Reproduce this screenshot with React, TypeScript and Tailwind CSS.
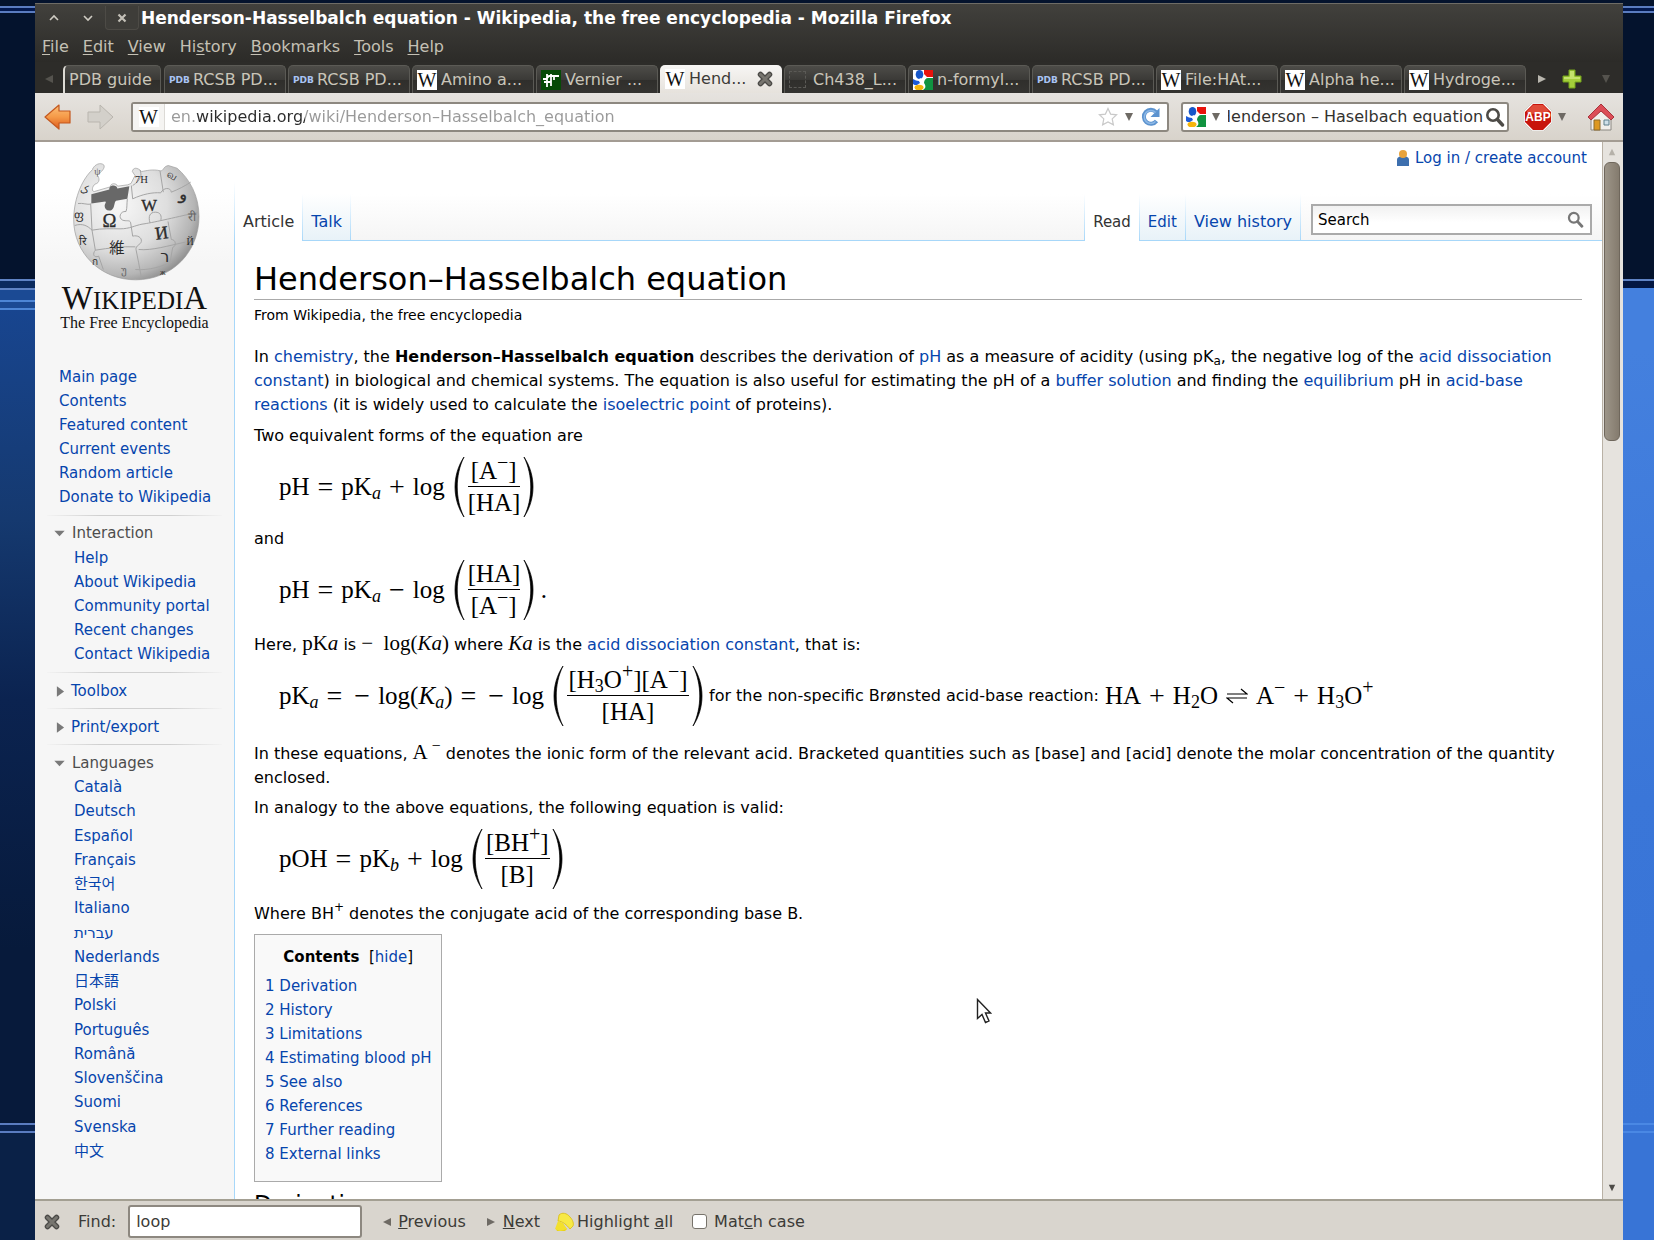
import React from 'react';

const link = 'text-[#0645ad] hover:underline';

function A({ children }: { children: React.ReactNode }) {
  return <a href="#" className={link}>{children}</a>;
}

/* ---------- Browser chrome icons ---------- */

function GoogleIcon() {
  return (
    <svg viewBox="0 0 20 20" className="h-5 w-5 shrink-0">
      <rect width="20" height="20" fill="#fff" />
      <path d="M11 0h9v7h-6l-3-3z" fill="#e8130c" />
      <path d="M20 8v12H10c3-2 3-4 1-7 0-3 2-5 4-5z" fill="#109340" />
      <path d="M0 9c2 1 4 2 6 2l1 2-3 2c-2 0-3 0-4-1z" fill="#1d5bd8" />
      <ellipse cx="6.500" cy="4.500" rx="3.800" ry="4.500" fill="#1656c9" />
      <path d="M7 8c2 1 3 2 3 4H7c-1-1-1-3 0-4z" fill="#fff" />
      <ellipse cx="6" cy="17.500" rx="4.500" ry="2.800" fill="#f5b50a" />
    </svg>
  );
}

function WIcon() {
  return (
    <span className="flex h-5 w-5 shrink-0 items-center justify-center bg-white font-['Liberation_Serif',serif] text-[20px] leading-5 text-[#111]">
      W
    </span>
  );
}

function PdbIcon() {
  return (
    <span className="w-5 shrink-0 text-center font-['DejaVu_Sans',sans-serif] text-[9px] leading-5 font-bold text-[#a9c3f3]">
      PDB
    </span>
  );
}

function VernierIcon() {
  return (
    <svg viewBox="0 0 20 20" className="h-5 w-5 shrink-0">
      <rect width="20" height="20" fill="#064a06" />
      <path d="M2 9h3l3-3h10M6 4v13M10 4v12M3 12h7M13 7v3" stroke="#fff" strokeWidth="1.800" fill="none" />
    </svg>
  );
}

function BlankIcon() {
  return <span className="mr-[3px] h-[17px] w-[17px] shrink-0 border border-dashed border-[#5b5a56]" />;
}

function CloseX({ className }: { className?: string }) {
  return (
    <svg viewBox="0 0 16 16" className={className}>
      <path d="M3.500 3.500l9 9M12.500 3.500l-9 9" stroke="#4b4a47" strokeWidth="5.500" strokeLinecap="round" />
      <path d="M3.500 3.500l9 9M12.500 3.500l-9 9" stroke="#77756f" strokeWidth="3" strokeLinecap="round" />
    </svg>
  );
}

function Tri({ dir, color, className }: { dir: 'l' | 'r' | 'd' | 'u'; color: string; className?: string }) {
  const d = { l: 'M9 1v8L1 5z', r: 'M1 1v8l8-4z', d: 'M1 1h8L5 9z', u: 'M1 9h8L5 1z' }[dir];
  return (
    <svg viewBox="0 0 10 10" preserveAspectRatio="none" className={className ?? 'h-[10px] w-[10px] shrink-0'}>
      <path d={d} fill={color} />
    </svg>
  );
}

function Magnifier({ className, color }: { className: string; color: string }) {
  return (
    <svg viewBox="0 0 20 20" className={className}>
      <circle cx="8" cy="8" r="5.700" fill="none" stroke={color} strokeWidth="2.600" />
      <path d="M12.500 12.500l5 5.500" stroke={color} strokeWidth="3.400" strokeLinecap="round" />
    </svg>
  );
}

function NavArrow({ forward }: { forward?: boolean }) {
  return (
    <svg viewBox="0 0 28 28" className="h-7 w-7">
      <defs>
        <linearGradient id="orange" x1="0" y1="0" x2="0" y2="1">
          <stop offset="0" stopColor="#fbbf78" />
          <stop offset="0.500" stopColor="#f59a48" />
          <stop offset="1" stopColor="#dd5a1c" />
        </linearGradient>
      </defs>
      {forward ? (
        <path d="M1 9h12V2l13 12-13 12v-7H1z" fill="#d3d0ca" stroke="#b9b5ae" strokeLinejoin="round" />
      ) : (
        <path d="M27 8H16V2L2 14l14 12v-6h11z" fill="url(#orange)" stroke="#c4581f" strokeWidth="1.200" strokeLinejoin="round" />
      )}
    </svg>
  );
}

/* ---------- Tabs ---------- */

type Tab = { label: string; icon: React.ReactNode; active?: boolean };
const tabs: Tab[] = [
  { label: 'RCSB PD...', icon: <PdbIcon /> },
  { label: 'RCSB PD...', icon: <PdbIcon /> },
  { label: 'Amino a...', icon: <WIcon /> },
  { label: 'Vernier ...', icon: <VernierIcon /> },
  { label: 'Hend...', icon: <WIcon />, active: true },
  { label: 'Ch438_L...', icon: <BlankIcon /> },
  { label: 'n-formyl...', icon: <GoogleIcon /> },
  { label: 'RCSB PD...', icon: <PdbIcon /> },
  { label: 'File:HAt...', icon: <WIcon /> },
  { label: 'Alpha he...', icon: <WIcon /> },
  { label: 'Hydroge...', icon: <WIcon /> },
];

const darkTab =
  'flex h-7 items-center rounded-t-[5px] border-x border-t border-[#5b5a55] bg-[linear-gradient(#4d4c48,#3b3a37_50%,#2f2e2b_51%,#353431)] text-[#c9c5b9]';

function TabBar() {
  return (
    <div className="flex h-[31px] shrink-0 items-end bg-[#2d2c29] text-base leading-5 whitespace-nowrap">
      <button aria-label="Scroll tabs left" className="flex h-7 w-7 items-center justify-center">
        <Tri dir="l" color="#55534e" />
      </button>
      <button className={`${darkTab} w-[98px] border-l-2 border-l-[#dcdad4] pl-1`}>PDB guide</button>
      <div className="ml-[3px] flex min-w-0 gap-[2px]">
        {tabs.map((t, i) =>
          t.active ? (
            <button key={i} className="flex h-7 w-[122px] items-center gap-1 rounded-t-[5px] bg-[linear-gradient(#f7f6f4,#e6e2dc)] pr-[9px] pl-[5px] text-[#3c3b37]">
              {t.icon}
              <span className="flex-1 text-left">{t.label}</span>
              <CloseX className="h-4 w-4" />
            </button>
          ) : (
            <button key={i} className={`${darkTab} w-[122px] gap-1 overflow-hidden px-1`}>
              {t.icon}
              <span className="truncate">{t.label}</span>
            </button>
          ),
        )}
      </div>
      <button aria-label="Scroll tabs right" className="ml-[10px] flex h-7 w-3 items-center justify-center">
        <Tri dir="r" color="#b9b6ae" />
      </button>
      <button aria-label="New tab" className="ml-[14px] flex h-7 w-5 items-center justify-center">
        <svg viewBox="0 0 20 20" className="h-5 w-5">
          <path d="M7 1h6v6h6v6h-6v6H7v-6H1V7h6z" fill="#a4cf3b" stroke="#74a31c" />
          <path d="M8 2h4v6h6v2H2V8h6z" fill="#c4e26c" />
        </svg>
      </button>
      <button aria-label="List all tabs" className="ml-[18px] flex h-7 w-3 items-center justify-center">
        <Tri dir="d" color="#55534e" />
      </button>
    </div>
  );
}

function TitleBar() {
  return (
    <div className="flex h-[29px] shrink-0 items-center border-t border-[#6e6c66] pl-[10px]">
      <button aria-label="Minimize" className="flex h-6 w-[18px] items-center justify-center">
        <svg viewBox="0 0 12 12" className="h-3 w-3"><path d="M2 8l4-4 4 4" fill="none" stroke="#cfccc3" strokeWidth="1.600" /></svg>
      </button>
      <button aria-label="Maximize" className="ml-4 flex h-6 w-[18px] items-center justify-center">
        <svg viewBox="0 0 12 12" className="h-3 w-3"><path d="M2 4l4 4 4-4" fill="none" stroke="#cfccc3" strokeWidth="1.600" /></svg>
      </button>
      <button aria-label="Close" className="ml-2 flex h-6 w-[34px] items-center justify-center rounded-b border-x border-b border-[#4d4b46] bg-[#3e3d39]">
        <svg viewBox="0 0 12 12" className="h-3 w-3"><path d="M2.500 2.500l7 7M9.500 2.500l-7 7" stroke="#c3c0b7" strokeWidth="2.200" /></svg>
      </button>
      <h2 className="ml-[2px] truncate text-[17px] leading-5 font-bold text-white">
        Henderson-Hasselbalch equation - Wikipedia, the free encyclopedia - Mozilla Firefox
      </h2>
    </div>
  );
}

const menus = [
  ['', 'F', 'ile'],
  ['', 'E', 'dit'],
  ['', 'V', 'iew'],
  ['Hi', 's', 'tory'],
  ['', 'B', 'ookmarks'],
  ['', 'T', 'ools'],
  ['', 'H', 'elp'],
];

function NavBar() {
  return (
    <div className="flex h-[49px] shrink-0 items-center border-b-2 border-[#a39c93] bg-[linear-gradient(#e6e3df,#d8d3cb)] pr-2 pl-2 text-base">
      <button aria-label="Back"><NavArrow /></button>
      <button aria-label="Forward" className="ml-4"><NavArrow forward /></button>
      <div className="ml-4 flex h-[30px] flex-1 items-center rounded-[3px] border-2 border-[#8d8880] bg-white">
        <span className="flex h-full w-8 items-center justify-center border-r border-[#dcdad6] bg-[#f5f4f2]"><WIcon /></span>
        <input
          aria-label="Location"
          defaultValue="en.wikipedia.org/wiki/Henderson–Hasselbalch_equation"
          className="ml-[6px] min-w-0 flex-1 bg-[linear-gradient(to_right,#999_25px,#2b2b2b_25px,#2b2b2b_134px,#999_134px)] bg-clip-text text-transparent outline-none"
        />
        <svg viewBox="0 0 20 20" className="h-5 w-5">
          <path d="M10 1.500l2.600 5.600 6 .7-4.400 4.100 1.200 6L10 15l-5.400 2.900 1.200-6L1.400 7.800l6-.7z" fill="#fff" stroke="#c9c9c9" strokeWidth="1.200" />
        </svg>
        <Tri dir="d" color="#6e6a64" className="mr-[3px] ml-[6px] h-[10px] w-[10px]" />
        <button aria-label="Reload" className="mr-[6px] ml-1">
          <svg viewBox="0 0 20 20" className="h-5 w-5">
            <path d="M15.500 14a7 7 0 1 1-.5-9" fill="none" stroke="#5c93cf" strokeWidth="4" />
            <path d="M18.500 1v9h-9z" fill="#5c93cf" />
            <path d="M14.500 14.500a6.500 6.500 0 1 1 0-9" fill="none" stroke="#8db8e6" strokeWidth="1.500" />
          </svg>
        </button>
      </div>
      <div className="ml-3 flex h-[30px] w-[328px] items-center rounded-[3px] border-2 border-[#8d8880] bg-white pr-[2px] pl-[3px]">
        <GoogleIcon />
        <Tri dir="d" color="#6e6a64" className="mx-[5px] h-[10px] w-[10px] shrink-0" />
        <input aria-label="Web search" defaultValue="Henderson – Haselbach equation" className="ml-[2px] min-w-0 flex-1 -indent-[9px] text-[#33322f] outline-none" />
        <Magnifier className="h-5 w-5 shrink-0" color="#4d4b47" />
      </div>
      <button aria-label="Adblock Plus" className="ml-[15px]">
        <svg viewBox="0 0 28 28" className="h-7 w-7">
          <path d="M8 0h12l8 8v12l-8 8H8l-8-8V8z" fill="#fff" stroke="#b5b0a8" strokeWidth="0.500" />
          <path d="M9 1h10l8 8v10l-8 8H9l-8-8V9z" fill="#c8150c" />
          <path d="M9 2h10l6 6c-6 3-14 4-22 2V8z" fill="#e04a38" />
          <text x="14" y="18" textAnchor="middle" fontSize="12" fontWeight="bold" fill="#fff" fontFamily="Liberation Sans, sans-serif">ABP</text>
        </svg>
      </button>
      <Tri dir="d" color="#6e6a64" className="ml-[5px] h-[10px] w-[10px]" />
      <button aria-label="Home" className="ml-5">
        <svg viewBox="0 0 28 28" className="h-7 w-7">
          <path d="M4 14L14 5l10 9v13H4z" fill="#f1efec" stroke="#8a8782" />
          <path d="M14 1l13 13-3 3L14 8 4 17l-3-3z" fill="#dc4d57" stroke="#a8323b" />
          <path d="M7 17h6v10H7z" fill="#dd9820" stroke="#8c6a2a" />
          <path d="M17 17h5v5h-5z" fill="#cfe0ea" stroke="#5c7f8c" />
        </svg>
      </button>
    </div>
  );
}

/* ---------- Wikipedia logo ---------- */

function Globe() {
  return (
    <svg viewBox="0 0 510 380" className="h-[127px] w-[170px]" role="img" aria-label="Wikipedia globe">
      <defs>
        <radialGradient id="ball" cx="0.350" cy="0.350" r="0.720">
          <stop offset="0" stopColor="#f8f8f8" />
          <stop offset="0.550" stopColor="#dedede" />
          <stop offset="0.850" stopColor="#b5b5b5" />
          <stop offset="1" stopColor="#8a8a8a" />
        </radialGradient>
      </defs>
      <path
        d="M128 40C100 65 72 120 71 190c0 100 80 181 186 181 108 0 190-82 190-190 0-62-28-113-66-145l-26-8c-18 4-12 16-24 16-22-6-44 0-56 2-14-14-26-12-28 0l8 12-12 24-10 4-30 4c-4-10-22-10-22 2l-48 14c-10 0-6-16 2-22 16-4 14-20 6-28 14-8 26-22 20-30-10-8-26-2-33 12z"
        fill="url(#ball)"
        stroke="#9a9a9a"
        strokeWidth="2"
      />
      <path d="M124 114l54-14c-2-14 22-16 24-3l36-7-6 38-34 6c-6 4-4 24-14 28-12 4-20-4-20-12 0-8 6-10 2-14l-42 6z" fill="#686868" />
      <g fill="none" stroke="#a5a5a5" strokeWidth="3">
        <path d="M122 142l4 80c30-6 60-4 84-4 30 0 44-10 66-14 30-4 90-18 168-36" />
        <path d="M232 128c-2 18 0 26-4 38-18-2-24 20-10 26 10 4 22-2 24 8l6 40c14-4 28 4 26 16-2 10-18 12-16 24l8 40 8 44" />
        <path d="M244 88l4 40c30-14 60-20 84-18 8-16 30-18 32-2 20-8 40-18 58-30" />
        <path d="M300 200c-6-20 0-32 16-32s20 12 16 26M354 196l10 54c14 0 16 20 4 24l-8 46" />
        <path d="M74 208c24-8 40 2 52 14l10 60c-10 12-4 24 10 18l14 40M136 282c40-6 80-12 120-10M266 280c40 4 90-12 140-22" />
        <path d="M84 142c14-2 28 4 38 2M256 340c40 4 80-10 110-22M270 42c6 14 4 30-22 46M330 44l10 64" />
      </g>
      <g fill="#2c2c2c" fontFamily="Liberation Serif, serif" textAnchor="middle">
        <text x="178" y="212" fontSize="56" stroke="#2c2c2c">Ω</text>
        <text x="297" y="165" fontSize="50" stroke="#2c2c2c">W</text>
        <text x="337" y="248" fontSize="54" stroke="#2c2c2c" transform="rotate(-8 337 248)">И</text>
        <text x="344" y="318" fontSize="48" fontFamily="DejaVu Sans, sans-serif">ר</text>
        <text x="201" y="291" fontSize="46" fontFamily="Noto Sans CJK JP, sans-serif">維</text>
        <text x="402" y="130" fontSize="48" stroke="#2c2c2c" transform="rotate(10 402 120)">و</text>
        <text x="274" y="82" fontSize="32">7Н</text>
        <text x="366" y="70" fontSize="32" transform="rotate(30 366 62)">வ</text>
        <text x="88" y="190" fontSize="36">ფ</text>
        <text x="98" y="266" fontSize="34">रि</text>
        <text x="104" y="112" fontSize="30">ک</text>
        <text x="426" y="196" fontSize="36" fill="#666">री</text>
        <text x="420" y="268" fontSize="30">Й</text>
        <text x="136" y="328" fontSize="30">ก</text>
        <text x="222" y="354" fontSize="34" fill="#666">უ</text>
        <text x="338" y="356" fontSize="24">ж</text>
        <text x="142" y="56" fontSize="30" fill="#666">ψ</text>
      </g>
    </svg>
  );
}

/* ---------- Sidebar ---------- */

function Rule() {
  return <hr className="mr-3 ml-3 h-px border-0 bg-[linear-gradient(to_right,#f3f3f3,#d0d0d0_30%,#d0d0d0_70%,#f3f3f3)]" />;
}

function Sidebar() {
  return (
    <aside className="w-[199px] shrink-0 bg-[linear-gradient(#fff_0,#fff_50px,#f6f6f6_120px)] text-[15px] leading-6">
      <a href="#" className="block pt-[14px] text-[#111]">
        <span className="ml-[15px] block w-[170px]"><Globe /></span>
        <span className="mt-px block text-center font-['Liberation_Serif',serif] text-[25px] leading-7 whitespace-nowrap">
          <span className="text-[33px]">W</span>IKIPEDI<span className="text-[33px]">A</span>
        </span>
        <span className="block text-center font-['Liberation_Serif',serif] text-base leading-4 whitespace-nowrap">The Free Encyclopedia</span>
      </a>
      <ul className="mt-[34px] mb-[6px] ml-6">
        {['Main page', 'Contents', 'Featured content', 'Current events', 'Random article', 'Donate to Wikipedia'].map((t) => (
          <li key={t}><A>{t}</A></li>
        ))}
      </ul>
      <Rule />
      <h3 className="mt-[5px] mb-px flex items-center gap-[6px] pl-[18px] text-[#4d4d4d]"><Tri dir="d" color="#797979" className="h-[7px] w-[13px]" />Interaction</h3>
      <ul className="mb-[6px] ml-[39px]">
        {['Help', 'About Wikipedia', 'Community portal', 'Recent changes', 'Contact Wikipedia'].map((t) => (
          <li key={t}><A>{t}</A></li>
        ))}
      </ul>
      <Rule />
      <h3 className="mt-[6px] mb-[5px] flex items-center gap-[6px] pl-[21px]"><Tri dir="r" color="#797979" className="h-[13px] w-[9px]" /><A>Toolbox</A></h3>
      <Rule />
      <h3 className="mt-[6px] mb-[5px] flex items-center gap-[6px] pl-[21px]"><Tri dir="r" color="#797979" className="h-[13px] w-[9px]" /><A>Print/export</A></h3>
      <Rule />
      <h3 className="mt-[6px] flex items-center gap-[6px] pl-[18px] text-[#4d4d4d]"><Tri dir="d" color="#797979" className="h-[7px] w-[13px]" />Languages</h3>
      <ul className="ml-[39px] flex h-[388px] flex-col justify-between">
        {['Català', 'Deutsch', 'Español', 'Français', '한국어', 'Italiano', 'עברית', 'Nederlands', '日本語', 'Polski', 'Português', 'Română', 'Slovenščina', 'Suomi', 'Svenska', '中文'].map((t) => (
          <li key={t} className="h-6"><A>{t}</A></li>
        ))}
      </ul>
    </aside>
  );
}

/* ---------- Math ---------- */

function Paren({ close }: { close?: boolean }) {
  return (
    <svg viewBox="0 0 12 62" className="h-[62px] w-3 shrink-0">
      <path d={close ? 'M1 1C13 19 13 43 1 61 10 43 10 19 1 1z' : 'M11 1C-1 19-1 43 11 61 2 43 2 19 11 1z'} fill="#000" stroke="#000" strokeWidth="0.700" />
    </svg>
  );
}

function Frac({ top, bottom, className }: { top: React.ReactNode; bottom: React.ReactNode; className?: string }) {
  return (
    <span className={`flex flex-col text-center leading-8 ${className ?? ''}`}>
      <span className="h-8 border-b border-black">{top}</span>
      <span className="h-8">{bottom}</span>
    </span>
  );
}

function Op({ children }: { children: React.ReactNode }) {
  return <span className="mx-2 text-[28px]">{children}</span>;
}

/** Minus sign that negates the term after it. */
function Neg() {
  return <span className="mr-2 ml-1 text-[28px]">−</span>;
}

function Sub({ children }: { children: React.ReactNode }) {
  return <sub className="-bottom-1 text-[18px] leading-none">{children}</sub>;
}

function Sup({ children }: { children: React.ReactNode }) {
  return <sup className="-top-[10px] text-[20px] leading-none">{children}</sup>;
}

const math = "flex items-center font-['Liberation_Serif',serif] text-[25px] leading-8 text-black whitespace-nowrap";
const eq = `${math} pl-[25px] h-[78px]`;
const inlineMath = "font-['Liberation_Serif',serif] text-[21px] leading-none text-black";

/* ---------- Article ---------- */

const toc = ['Derivation', 'History', 'Limitations', 'Estimating blood pH', 'See also', 'References', 'Further reading', 'External links'];

function Article() {
  return (
    <article className="bg-white pr-5 pl-[19px] text-base leading-6 text-black">
      <h1 className="mt-[19px] border-b border-[#aaa] text-[32px] leading-[39px]">Henderson–Hasselbalch equation</h1>
      <p className="mt-[3px] text-sm leading-6">From Wikipedia, the free encyclopedia</p>
      <p className="mt-[18px]">
        In <A>chemistry</A>, the <b>Henderson–Hasselbalch equation</b> describes the derivation of <A>pH</A> as a measure of acidity (using pK
        <sub className="text-xs leading-none">a</sub>, the negative log of the <A>acid dissociation constant</A>) in biological and chemical systems. The
        equation is also useful for estimating the pH of a <A>buffer solution</A> and finding the <A>equilibrium</A> pH in <A>acid-base reactions</A> (it is
        widely used to calculate the <A>isoelectric point</A> of proteins).
      </p>
      <p className="mt-[7px]">Two equivalent forms of the equation are</p>
      <div className={eq}>
        <span>pH</span><Op>=</Op><span>pK<Sub><i>a</i></Sub></span><Op>+</Op><span className="mr-2">log</span>
        <Paren />
        <Frac className="mx-[3px] w-[52px]" top={<>[A<Sup>−</Sup>]</>} bottom="[HA]" />
        <Paren close />
      </div>
      <p className="mt-px">and</p>
      <div className={eq}>
        <span>pH</span><Op>=</Op><span>pK<Sub><i>a</i></Sub></span><Op>−</Op><span className="mr-2">log</span>
        <Paren />
        <Frac className="mx-[3px] w-[52px]" top="[HA]" bottom={<>[A<Sup>−</Sup>]</>} />
        <Paren close /><span className="ml-[6px]">.</span>
      </div>
      <p className="mt-1 h-6">
        Here, <span className={inlineMath}>pK<i>a</i></span> is <span className={inlineMath}>−&nbsp; log(<i>Ka</i>)</span> where{' '}
        <span className={inlineMath}><i>Ka</i></span> is the <A>acid dissociation constant</A>, that is:
      </p>
      <div className={eq}>
        <span>pK<Sub><i>a</i></Sub></span><Op>=</Op><Neg /><span>log(<i>K</i><Sub><i>a</i></Sub>)</span><Op>=</Op><Neg /><span className="mr-2">log</span>
        <Paren />
        <Frac className="mx-[3px] w-[122px]" top={<>[H<Sub>3</Sub>O<Sup>+</Sup>][A<Sup>−</Sup>]</>} bottom="[HA]" />
        <Paren close />
        <span className="mr-[6px] ml-[5px] font-['DejaVu_Sans',sans-serif] text-base">for the non-specific Brønsted acid-base reaction:</span>
        <span>HA</span><Op>+</Op><span>H<Sub>2</Sub>O</span>
        <svg viewBox="0 0 22 16" className="mx-2 h-4 w-[22px] shrink-0">
          <path d="M1 6h20l-6-5M21 10H1l6 5" fill="none" stroke="#000" strokeWidth="1.200" />
        </svg>
        <span>A<Sup>−</Sup></span><Op>+</Op><span>H<Sub>3</Sub>O<Sup>+</Sup></span>
      </div>
      <p className="mt-[7px]">
        In these equations, <span className={inlineMath}>A <sup className="leading-none">−</sup></span> denotes the ionic form of the relevant acid. Bracketed quantities such as [base] and
        [acid] denote the molar concentration of the quantity enclosed.
      </p>
      <p className="mt-[6px]">In analogy to the above equations, the following equation is valid:</p>
      <div className={eq}>
        <span>pOH</span><Op>=</Op><span>pK<Sub><i>b</i></Sub></span><Op>+</Op><span className="mr-2">log</span>
        <Paren />
        <Frac className="mx-[2px] w-[65px]" top={<>[BH<Sup>+</Sup>]</>} bottom="[B]" />
        <Paren close />
      </div>
      <p className="mt-1 h-6">Where BH<sup className="-top-2 text-xs leading-none">+</sup> denotes the conjugate acid of the corresponding base B.</p>
      <nav aria-label="Contents" className="mt-2 w-fit border border-[#aaa] bg-[#f9f9f9] px-[10px] pt-[10px] pb-[15px] text-[15px] leading-6">
        <div className="mb-[5px] text-center"><b>Contents</b>&nbsp; [<button className={link}>hide</button>]</div>
        <ol>
          {toc.map((t, i) => (
            <li key={t}><a href="#" className={link}>{i + 1} {t}</a></li>
          ))}
        </ol>
      </nav>
      <h2 className="mt-[6px] flex items-baseline justify-between text-[23px] leading-8">
        Derivation <span className="text-[15px]">[<A>edit</A>]</span>
      </h2>
    </article>
  );
}

/** Tab divider that fades in towards the baseline of the tab row. */
function Divider() {
  return <span className="w-px shrink-0 bg-[linear-gradient(#fff,#a7d7f9)]" />;
}

function PageHeader() {
  const tabLink = 'flex items-center bg-[linear-gradient(#fff,#e8f2f8)] px-2 pt-[9px] text-[#0645ad]';
  return (
    <header className="text-base">
      <div className="flex h-[52px] items-start justify-end gap-[6px] pt-1 pr-[15px] text-[15px] leading-6">
        <svg viewBox="0 0 12 16" className="mt-1 h-4 w-3">
          <path d="M0 16V10c0-3 3-4 6-4s6 1 6 4v6z" fill="#3d6fae" />
          <circle cx="6" cy="4" r="4" fill="#e8a33c" />
        </svg>
        <A>Log in / create account</A>
      </div>
      <div className="flex h-[47px] bg-[linear-gradient(#fff,#f5f5f5)] text-[15px] leading-6">
        <a href="#" className="flex items-center bg-white pt-[9px] pr-2 pl-2 text-base text-[#333]">Article</a>
        <Divider />
        <div className="flex flex-1 border-b border-[#a7d7f9] text-base">
          <a href="#" className={tabLink}>Talk</a>
          <Divider />
        </div>
        <Divider />
        <a href="#" className="flex items-center bg-white px-2 pt-[9px] text-[#333]">Read</a>
        <Divider />
        <div className="flex border-b border-[#a7d7f9] pr-[10px]">
          <a href="#" className={tabLink}>Edit</a>
          <Divider />
          <a href="#" className={`${tabLink} text-base`}>View history</a>
          <Divider />
          <div className="mt-[10px] ml-[10px] flex h-[31px] w-[281px] items-center border-2 border-[#aaa] bg-[linear-gradient(#f1f1f1,#fff_60%)] pr-[6px] pl-[5px]">
            <input aria-label="Search" placeholder="Search" className="min-w-0 flex-1 outline-none placeholder:text-black" />
            <button aria-label="Go"><Magnifier className="h-[17px] w-[17px]" color="#777" /></button>
          </div>
        </div>
      </div>
    </header>
  );
}

function ScrollBar() {
  return (
    <div className="flex w-[21px] shrink-0 flex-col items-center border-l border-[#b9b1a5] bg-[#e6e3de] pr-[2px]">
      <Tri dir="u" color="#b5b1a9" className="my-[6px] h-2 w-2" />
      <div className="h-[279px] w-4 rounded-[6px] border border-[#6f675c] bg-[linear-gradient(to_right,#9d9588,#847b6e)]" />
      <Tri dir="d" color="#4d4b47" className="mt-auto mb-[7px] h-2 w-2" />
    </div>
  );
}

function FindBar() {
  return (
    <form className="flex h-[41px] shrink-0 items-center border-t-2 border-[#a39f92] bg-[#d9d5ce] pt-[2px] pl-[9px] text-base leading-5 text-[#3c3b37]">
      <button type="button" aria-label="Close find bar"><CloseX className="h-4 w-4" /></button>
      <label htmlFor="find" className="ml-[18px]">Find:</label>
      <input id="find" defaultValue="loop" className="ml-3 h-[33px] w-[234px] rounded-[3px] border-2 border-[#8d8880] bg-white px-[6px] outline-none" />
      <button type="button" className="ml-5 flex items-center gap-[6px]"><Tri dir="l" color="#6e6a64" /><span><u>P</u>revious</span></button>
      <button type="button" className="ml-5 flex items-center gap-[7px]"><Tri dir="r" color="#6e6a64" /><span><u>N</u>ext</span></button>
      <button type="button" className="ml-[14px] flex items-center gap-[3px]">
        <svg viewBox="0 0 20 20" className="h-5 w-5">
          <path d="M2 17l5-6 6 6-2 2H3z" fill="#e8d21a" />
          <path d="M5 3c3-3 8-2 11 2 3 3 4 7 3 9l-3 3C13 13 8 9 4 9z" fill="#f7e945" stroke="#d9bd10" strokeWidth="0.800" />
          <path d="M4 9l5 2 4 6-7 2-5-2z" fill="#f3e02d" />
        </svg>
        <span>Highlight <u>a</u>ll</span>
      </button>
      <label className="ml-[19px] flex items-center gap-[7px]">
        <input type="checkbox" className="h-[15px] w-[15px] appearance-none rounded-[3px] border border-[#77736b] bg-white" />
        <span>Mat<u>c</u>h case</span>
      </label>
    </form>
  );
}

export default function App() {
  return (
    <div className="flex h-screen overflow-hidden bg-[#04132d] font-['DejaVu_Sans','Noto_Sans_CJK_JP','Noto_Sans_CJK_KR',sans-serif]">
      <div className="w-[35px] shrink-0 bg-[linear-gradient(#04132d_6px,#5a7cc0_6px,#5a7cc0_8px,#02184f_8px,#02184f_11px,#5a7cc0_11px,#5a7cc0_13px,#04132d_13px,#04132d_279px,#5f83c4_279px,#5f83c4_281px,#0b2a5e_281px,#0b2a5e_288px,#5f83c4_288px,#5f83c4_290px,#1b4a94_290px,#1b4a94_300px,#4d86d6_300px,#4d86d6_302px,#1b4a94_302px,#1b4a94_308px,#4d86d6_308px,#4d86d6_310px,#18458f_310px,#15396f_520px,#0b2350_700px,#071a3b_950px,#071a3b_1123px,#5a7cc0_1123px,#5a7cc0_1125px,#0a2350_1125px,#0a2350_1131px,#5a7cc0_1131px,#5a7cc0_1133px,#0a2147_1133px)]" />
      <div className="relative flex min-w-0 flex-1 flex-col pt-[3px]">
        <div className="bg-[linear-gradient(#42413d,#2c2b28)]">
          <TitleBar />
          <nav className="flex h-[30px] items-center gap-[14px] px-[7px] pb-px text-base leading-5 text-[#c5c1b5]">
            {menus.map(([a, b, c]) => (
              <button key={b + c}>{a}<u className="underline-offset-2">{b}</u>{c}</button>
            ))}
          </nav>
        </div>
        <TabBar />
        <NavBar />
        <div className="flex min-h-0 flex-1 bg-white">
          <Sidebar />
          <div className="flex w-px shrink-0 bg-[linear-gradient(#fff_40px,#a7d7f9_100px)]" />
          <main className="min-w-0 flex-1 overflow-hidden">
            <PageHeader />
            <Article />
          </main>
          <ScrollBar />
        </div>
        <FindBar />
        <svg viewBox="0 0 16 26" className="pointer-events-none absolute top-[998px] left-[941px] h-[26px] w-4">
          <path d="M1.500 1.500v19l4.500-4 3.500 8 3.500-1.500-3.500-8h5z" fill="#fff" stroke="#222" strokeWidth="1.400" />
        </svg>
      </div>
      <div className="w-[31px] shrink-0 bg-[linear-gradient(#04132d_6px,#5a7cc0_6px,#5a7cc0_8px,#02184f_8px,#02184f_11px,#5a7cc0_11px,#5a7cc0_13px,#04132d_13px,#04132d_279px,#5f83c4_279px,#5f83c4_281px,#031742_281px,#031742_288px,#4480de_288px,#4480de_350px,#3a76d8_800px,#3874d6_1123px,#4a88e4_1123px,#4a88e4_1125px,#3874d6_1125px,#3874d6_1131px,#4a88e4_1131px,#4a88e4_1133px,#3874d6_1133px)]" />
    </div>
  );
}
